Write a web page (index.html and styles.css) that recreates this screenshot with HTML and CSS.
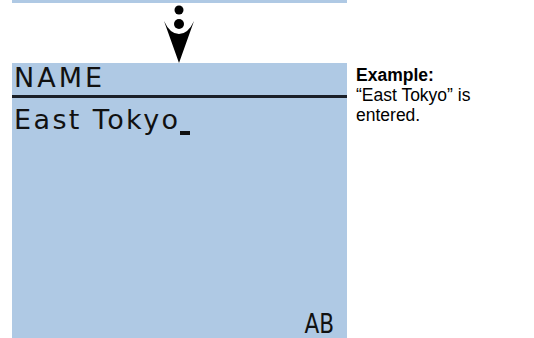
FILE: index.html
```html
<!DOCTYPE html>
<html lang="en">
<head>
    <meta charset="UTF-8">
    <title>Name entry example</title>
    <link rel="stylesheet" href="styles.css">
</head>
<body>
    <div class="page">
        <div class="left">
            <div class="screen-top"></div>
            <div class="arrow">
                <svg width="32" height="60" viewBox="0 0 32 60">
                    <circle cx="16" cy="7" r="4.5" fill="#000"/>
                    <circle cx="16" cy="21" r="5" fill="#000"/>
                    <path d="M1 18 Q7 31 16 31 Q25 31 31 18 L16 60 Z" fill="#000"/>
                </svg>
            </div>
            <div class="screen">
                <div class="screen-title">NAME</div>
                <div class="screen-value">East Tokyo<span class="cursor"></span></div>
                <div class="screen-mode"><span>AB</span></div>
            </div>
        </div>
        <div class="note">
            <p><b>Example:</b><br>&ldquo;East Tokyo&rdquo; is<br>entered.</p>
        </div>
    </div>
</body>
</html>
```

FILE: styles.css
```css
body {
    margin: 0;
    padding: 0;
    background: #fff;
    color: #000;
    font-family: "Liberation Sans", Arial, sans-serif;
}

.page {
    display: flex;
    height: 338px;
    overflow: hidden;
}

.left {
    display: flex;
    flex-direction: column;
    width: 335px;
    margin-left: 12px;
}

.screen-top {
    height: 3px;
    background: #afc9e4;
}

.arrow {
    height: 60px;
    padding-left: 151px;
}

.arrow svg {
    display: block;
}

.screen {
    flex: 1;
    display: flex;
    flex-direction: column;
    background: #afc9e4;
    color: #111;
    font-family: "DejaVu Sans", sans-serif;
    font-size: 27px;
}

.screen-title {
    height: 35px;
    line-height: 29px;
    padding-left: 2px;
    letter-spacing: 3px;
    border-bottom: 3px solid #1a1f28;
    box-sizing: border-box;
}

.screen-title span,
.screen-title {
    word-spacing: 0;
}

.screen-value {
    margin-top: 7px;
    line-height: 29px;
    padding-left: 2px;
    letter-spacing: 2.4px;
}

.cursor {
    display: inline-block;
    width: 10px;
    height: 4px;
    margin-left: 0;
    background: #111;
    vertical-align: -6px;
}

.screen-mode {
    margin-top: auto;
    display: flex;
    justify-content: flex-end;
    padding-right: 13px;
    line-height: 28px;
}

.screen-mode span {
    display: inline-block;
    transform: scaleX(0.8);
    transform-origin: right;
}

.note {
    margin-left: 9px;
    margin-top: 65px;
}

.note p {
    margin: 0;
    font-size: 17.5px;
    line-height: 20px;
}
```
